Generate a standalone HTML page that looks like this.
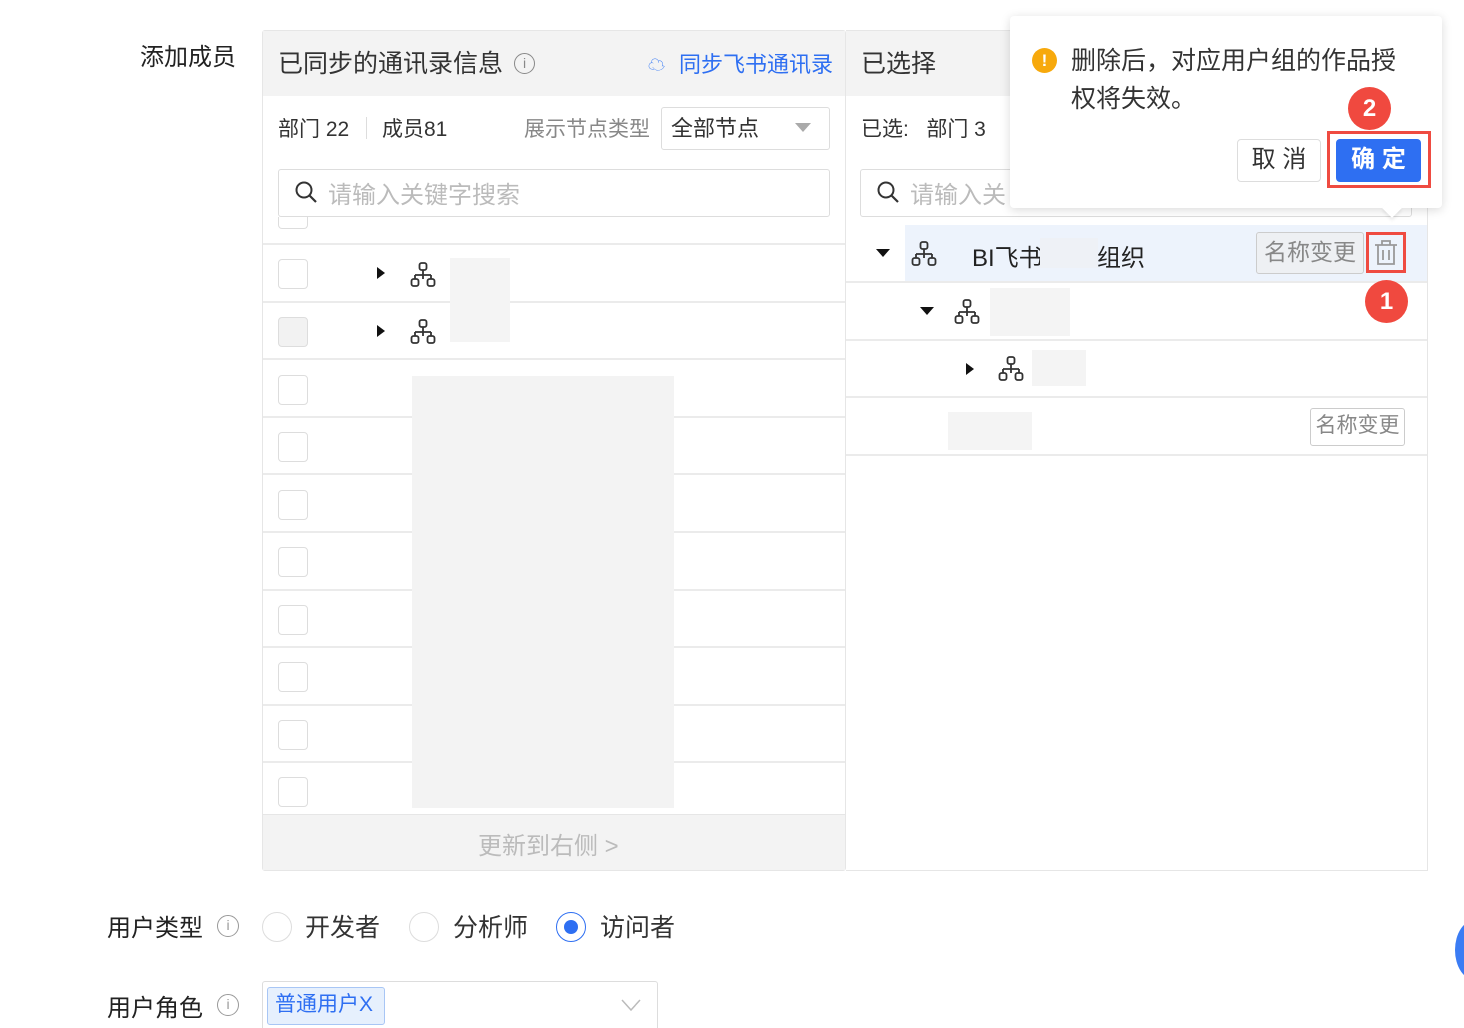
<!DOCTYPE html><html><head><meta charset="utf-8"><style>
*{box-sizing:border-box;margin:0;padding:0}
html,body{width:1464px;height:1028px;overflow:hidden}
body{background:#fff;position:relative;font-family:"Liberation Sans","Noto Sans CJK SC",sans-serif;color:#333}
.a{position:absolute;white-space:nowrap}
.hl{position:absolute;height:2px;background:#ebebeb}
.cb{position:absolute;left:278px;width:30px;height:30px;border:1.5px solid #ddd;border-radius:4px;background:#fff}
.blk{position:absolute;background:#f4f4f4}
</style></head><body>
<div class="a" style="left:140px;top:37px;font-size:24px;color:#222">添加成员</div>

<div class="a" style="left:262px;top:30px;width:584px;height:841px;border:1px solid #e6e6e6;border-radius:3px"></div>
<div class="a" style="left:263px;top:31px;width:582px;height:65px;background:#f3f3f3"></div>
<div class="a" style="left:278px;top:44px;font-size:25px;color:#333">已同步的通讯录信息</div>
<div class="a" style="left:514px;top:53px;width:21px;height:21px;border:1.5px solid #888;border-radius:50%;font-size:14px;text-align:center;line-height:18px;color:#888">i</div>
<div class="a" style="left:648px;top:51px;font-size:17px;color:#3a7cf5">☁</div>
<div class="a" style="left:679px;top:47px;font-size:22px;color:#2e6ff2">同步飞书通讯录</div>
<div class="a" style="left:278px;top:113px;font-size:21px;color:#333">部门 22</div>
<div class="a" style="left:366px;top:117px;width:1px;height:22px;background:#ddd"></div>
<div class="a" style="left:382px;top:113px;font-size:21px;color:#333">成员81</div>
<div class="a" style="left:524px;top:113px;font-size:21px;color:#888">展示节点类型</div>
<div class="a" style="left:661px;top:107px;width:169px;height:43px;border:1px solid #ddd;border-radius:3px"></div>
<div class="a" style="left:671px;top:111px;font-size:22px;color:#333">全部节点</div>
<div class="a" style="left:795px;top:123px;width:0;height:0;border-left:8px solid transparent;border-right:8px solid transparent;border-top:9px solid #aaa"></div>
<div class="a" style="left:278px;top:169px;width:552px;height:48px;border:1px solid #ddd;border-radius:3px"></div>
<svg class="a" style="left:294px;top:180px" width="26" height="26"><circle cx="10" cy="10" r="7.5" fill="none" stroke="#333" stroke-width="2"/><line x1="15.5" y1="15.5" x2="22" y2="22" stroke="#333" stroke-width="2.2"/></svg>
<div class="a" style="left:328px;top:175px;font-size:24px;color:#bbb">请输入关键字搜索</div>
<div class="cb" style="top:217px;height:12px;border-top:none;border-radius:0 0 4px 4px"></div>
<div class="hl" style="left:263px;top:243px;width:582px"></div>
<div class="hl" style="left:263px;top:301px;width:582px"></div>
<div class="hl" style="left:263px;top:358px;width:582px"></div>
<div class="hl" style="left:263px;top:416px;width:582px"></div>
<div class="hl" style="left:263px;top:473px;width:582px"></div>
<div class="hl" style="left:263px;top:531px;width:582px"></div>
<div class="hl" style="left:263px;top:589px;width:582px"></div>
<div class="hl" style="left:263px;top:646px;width:582px"></div>
<div class="hl" style="left:263px;top:704px;width:582px"></div>
<div class="hl" style="left:263px;top:761px;width:582px"></div>
<div class="cb" style="top:259px"></div>
<div class="cb" style="top:317px;background:#f2f2f2"></div>
<div class="cb" style="top:375px"></div><div class="cb" style="top:432px"></div><div class="cb" style="top:490px"></div><div class="cb" style="top:547px"></div><div class="cb" style="top:605px"></div><div class="cb" style="top:662px"></div><div class="cb" style="top:720px"></div><div class="cb" style="top:777px"></div>
<div class="a" style="left:377px;top:267px;border-top:6px solid transparent;border-bottom:6px solid transparent;border-left:8px solid #111"></div>
<div class="a" style="left:377px;top:325px;border-top:6px solid transparent;border-bottom:6px solid transparent;border-left:8px solid #111"></div>
<svg class="a" style="left:410px;top:261px" width="28" height="28"><g fill="none" stroke="#333" stroke-width="1.8"><rect x="9.5" y="2" width="7" height="7" rx="2"/><path d="M13 9v5M5 14h16M5 14v4M21 14v4M13 14v4"/><rect x="1.5" y="18" width="7" height="7" rx="2"/><rect x="17.5" y="18" width="7" height="7" rx="2"/></g></svg>
<svg class="a" style="left:410px;top:318px" width="28" height="28"><g fill="none" stroke="#333" stroke-width="1.8"><rect x="9.5" y="2" width="7" height="7" rx="2"/><path d="M13 9v5M5 14h16M5 14v4M21 14v4M13 14v4"/><rect x="1.5" y="18" width="7" height="7" rx="2"/><rect x="17.5" y="18" width="7" height="7" rx="2"/></g></svg>
<div class="blk" style="left:450px;top:258px;width:60px;height:84px"></div>
<div class="blk" style="left:412px;top:376px;width:262px;height:432px;background:#f3f3f3"></div>
<div class="a" style="left:263px;top:814px;width:582px;height:56px;background:#f3f3f3;border-top:1px solid #e6e6e6"></div>
<div class="a" style="left:478px;top:826px;font-size:24px;color:#bbb">更新到右侧 &gt;</div>

<div class="a" style="left:846px;top:30px;width:582px;height:841px;border:1px solid #e6e6e6;border-left:none"></div>
<div class="a" style="left:846px;top:31px;width:581px;height:65px;background:#f3f3f3"></div>
<div class="a" style="left:861px;top:44px;font-size:25px;color:#333">已选择</div>
<div class="a" style="left:861px;top:113px;font-size:21px;color:#333">已选:&nbsp;&nbsp; 部门 3</div>
<div class="a" style="left:860px;top:169px;width:552px;height:48px;border:1px solid #ddd;border-radius:3px"></div>
<svg class="a" style="left:876px;top:180px" width="26" height="26"><circle cx="10" cy="10" r="7.5" fill="none" stroke="#333" stroke-width="2"/><line x1="15.5" y1="15.5" x2="22" y2="22" stroke="#333" stroke-width="2.2"/></svg>
<div class="a" style="left:910px;top:175px;font-size:24px;color:#bbb">请输入关</div>
<div class="a" style="left:905px;top:225px;width:522px;height:57px;background:#edf3fc"></div>
<div class="hl" style="left:846px;top:281px;width:581px"></div>
<div class="hl" style="left:846px;top:339px;width:581px"></div>
<div class="hl" style="left:846px;top:396px;width:581px"></div>
<div class="hl" style="left:846px;top:454px;width:581px"></div>
<div class="a" style="left:876px;top:249px;border-left:7px solid transparent;border-right:7px solid transparent;border-top:8px solid #111"></div>
<div class="a" style="left:920px;top:307px;border-left:7px solid transparent;border-right:7px solid transparent;border-top:8px solid #111"></div>
<div class="a" style="left:966px;top:363px;border-top:6px solid transparent;border-bottom:6px solid transparent;border-left:8px solid #111"></div>
<svg class="a" style="left:911px;top:240px" width="28" height="28"><g fill="none" stroke="#333" stroke-width="1.8"><rect x="9.5" y="2" width="7" height="7" rx="2"/><path d="M13 9v5M5 14h16M5 14v4M21 14v4M13 14v4"/><rect x="1.5" y="18" width="7" height="7" rx="2"/><rect x="17.5" y="18" width="7" height="7" rx="2"/></g></svg>
<svg class="a" style="left:954px;top:298px" width="28" height="28"><g fill="none" stroke="#333" stroke-width="1.8"><rect x="9.5" y="2" width="7" height="7" rx="2"/><path d="M13 9v5M5 14h16M5 14v4M21 14v4M13 14v4"/><rect x="1.5" y="18" width="7" height="7" rx="2"/><rect x="17.5" y="18" width="7" height="7" rx="2"/></g></svg>
<svg class="a" style="left:998px;top:355px" width="28" height="28"><g fill="none" stroke="#333" stroke-width="1.8"><rect x="9.5" y="2" width="7" height="7" rx="2"/><path d="M13 9v5M5 14h16M5 14v4M21 14v4M13 14v4"/><rect x="1.5" y="18" width="7" height="7" rx="2"/><rect x="17.5" y="18" width="7" height="7" rx="2"/></g></svg>
<div class="a" style="left:972px;top:238px;font-size:24px;color:#222">BI飞书</div>
<div class="a" style="left:1040px;top:238px;width:58px;height:30px;background:#eef1f6"></div>
<div class="a" style="left:1097px;top:238px;font-size:24px;color:#222">组织</div>
<div class="blk" style="left:990px;top:288px;width:80px;height:48px"></div>
<div class="blk" style="left:1032px;top:350px;width:54px;height:36px"></div>
<div class="blk" style="left:948px;top:412px;width:84px;height:38px"></div>
<div class="a" style="left:1256px;top:232px;width:108px;height:42px;border:1px solid #ccc;border-radius:3px;background:#eef0f3;font-size:23px;color:#888;text-align:center;line-height:38px">名称变更</div>
<div class="a" style="left:1310px;top:408px;width:95px;height:38px;border:1px solid #ccc;border-radius:3px;font-size:21px;color:#888;text-align:center;line-height:34px">名称变更</div>
<div class="a" style="left:1366px;top:232px;width:40px;height:41px;border:3px solid #ef4b41"></div>
<svg class="a" style="left:1373px;top:239px" width="26" height="28"><g fill="none" stroke="#999" stroke-width="1.8"><path d="M2 6h22M9 6V2h8v4M5 6v19h16V6M10 11v10M16 11v10"/></g></svg>
<div class="a" style="left:1365px;top:280px;width:43px;height:43px;border-radius:50%;background:#f0493f;color:#fff;font-size:24px;font-weight:bold;text-align:center;line-height:43px">1</div>

<div class="a" style="left:1010px;top:16px;width:432px;height:192px;background:#fff;border-radius:4px;box-shadow:0 2px 10px rgba(0,0,0,.15)"></div>
<div class="a" style="left:1385px;top:201px;width:14px;height:14px;background:#fff;transform:rotate(45deg);box-shadow:2px 2px 3px rgba(0,0,0,.08)"></div>
<div class="a" style="left:1032px;top:48px;width:25px;height:25px;border-radius:50%;background:#f7a90c;color:#fff;font-size:17px;font-weight:bold;text-align:center;line-height:25px">!</div>
<div class="a" style="left:1071px;top:42px;font-size:25px;color:#333;line-height:38px;white-space:normal;width:336px">删除后，对应用户组的作品授权将失效。</div>
<div class="a" style="left:1348px;top:87px;width:43px;height:43px;border-radius:50%;background:#f0493f;color:#fff;font-size:24px;font-weight:bold;text-align:center;line-height:43px">2</div>
<div class="a" style="left:1237px;top:139px;width:84px;height:43px;border:1px solid #ddd;border-radius:4px;font-size:24px;text-align:center;line-height:40px;color:#333">取 消</div>
<div class="a" style="left:1327px;top:131px;width:104px;height:57px;border:3px solid #ef4b41"></div>
<div class="a" style="left:1336px;top:139px;width:85px;height:43px;background:#2e6ff2;border-radius:4px;font-size:24px;text-align:center;line-height:42px;color:#fff;font-weight:bold">确 定</div>

<div class="a" style="left:107px;top:908px;font-size:24px;color:#222">用户类型</div>
<div class="a" style="left:217px;top:915px;width:22px;height:22px;border:1.5px solid #999;border-radius:50%;font-size:14px;text-align:center;line-height:19px;color:#999">i</div>
<div class="a" style="left:262px;top:912px;width:30px;height:30px;border:1.5px solid #ddd;border-radius:50%"></div>
<div class="a" style="left:305px;top:908px;font-size:25px;color:#333">开发者</div>
<div class="a" style="left:409px;top:912px;width:30px;height:30px;border:1.5px solid #ddd;border-radius:50%"></div>
<div class="a" style="left:453px;top:908px;font-size:25px;color:#333">分析师</div>
<div class="a" style="left:556px;top:912px;width:30px;height:30px;border:1.5px solid #2e6ff2;border-radius:50%"></div>
<div class="a" style="left:564px;top:920px;width:14px;height:14px;background:#2e6ff2;border-radius:50%"></div>
<div class="a" style="left:600px;top:908px;font-size:25px;color:#333">访问者</div>
<div class="a" style="left:107px;top:988px;font-size:24px;color:#222">用户角色</div>
<div class="a" style="left:217px;top:994px;width:22px;height:22px;border:1.5px solid #999;border-radius:50%;font-size:14px;text-align:center;line-height:19px;color:#999">i</div>
<div class="a" style="left:262px;top:981px;width:396px;height:60px;border:1px solid #ddd;border-radius:3px"></div>
<div class="a" style="left:267px;top:987px;width:118px;height:38px;background:#e6f0fd;border:1px solid #a8c6f5;border-radius:3px;font-size:21px;color:#2e6ff2;line-height:34px;padding-left:7px">普通用户X</div>
<svg class="a" style="left:620px;top:998px" width="22" height="14"><path d="M2 2l9 10 9-10" fill="none" stroke="#bbb" stroke-width="1.5"/></svg>
<div class="a" style="left:1455px;top:920px;width:40px;height:60px;border-radius:50%;background:#3b7cf4"></div>
</body></html>
